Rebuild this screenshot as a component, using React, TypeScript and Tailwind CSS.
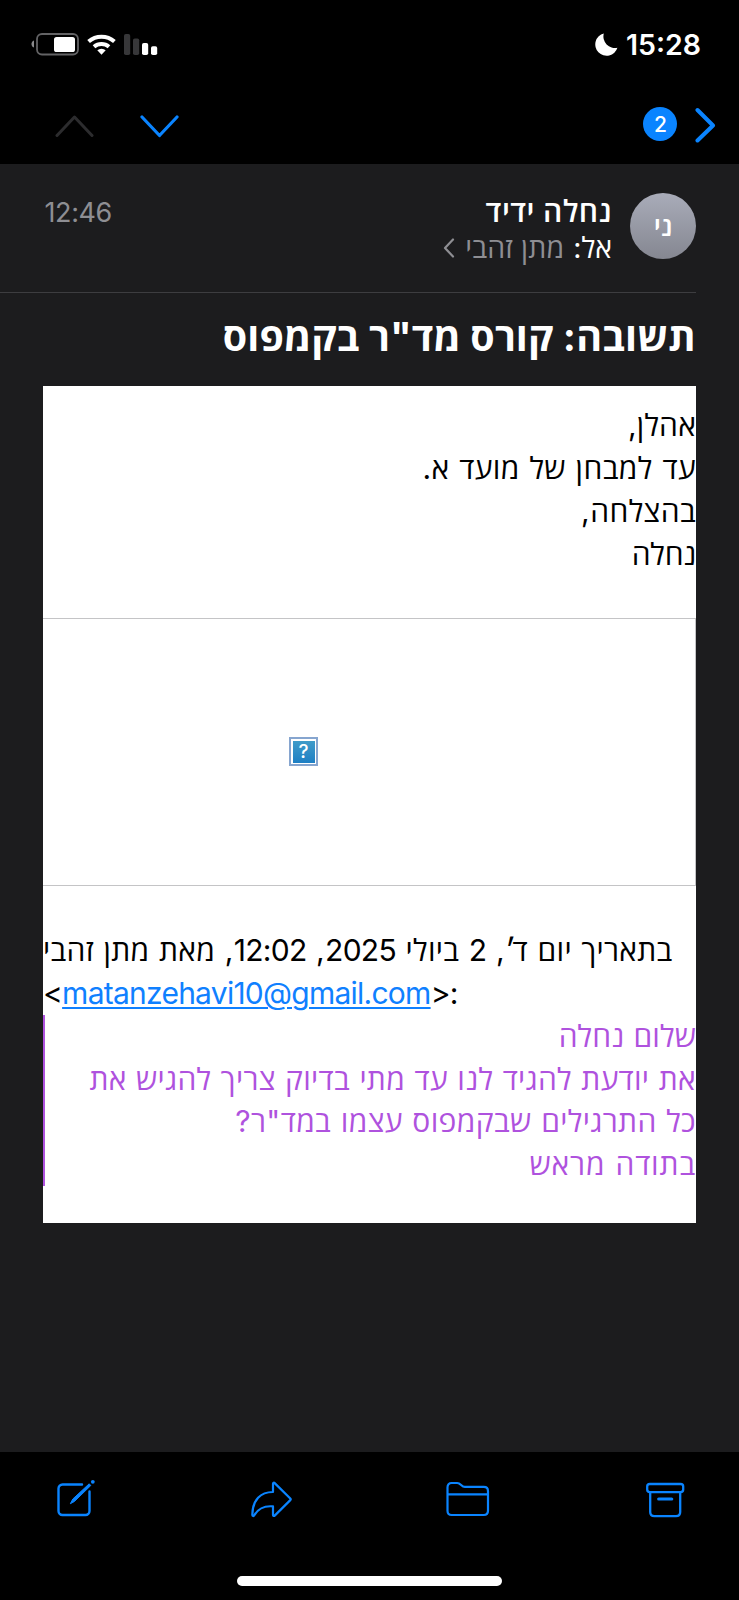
import React from "react";

const BodyLine = ({ children, className = "" }: { children: React.ReactNode; className?: string }) => (
  <p className={`h-[42.8px] whitespace-nowrap leading-[42.8px] [word-spacing:0.8px] ${className}`}>{children}</p>
);

const Num = ({ children }: { children: React.ReactNode }) => <span className="tracking-[-0.7px]">{children}</span>;

const StatusBar = () => (
  <div dir="ltr" className="flex h-[88px] items-center justify-between pl-[31px] pr-[38px]">
    <svg width="128" height="24" viewBox="0 0 128 24" className="shrink-0">
      <path d="M3 8.5c-3.400 1-3.400 6 0 7z" fill="#8a8a8c" />
      <rect x="6" y="2" width="41" height="20.500" rx="5" fill="none" stroke="#636365" strokeWidth="1.800" />
      <rect x="23" y="5" width="21" height="15" rx="2.600" fill="#fff" />
      <g fill="none" stroke="#fff" strokeWidth="4">
        <path d="M57.600 9.600a19.500 19.500 0 0 1 25.800 0" />
        <path d="M63 14.800a11.500 11.500 0 0 1 15 0" />
      </g>
      <path d="M66.300 18.300a6.200 6.200 0 0 1 8.400 0l-4.200 4.500z" fill="#fff" />
      <rect x="93" y="2" width="6.200" height="21" rx="1.800" fill="#373739" />
      <rect x="102" y="6.400" width="6.200" height="16.600" rx="1.800" fill="#373739" />
      <rect x="111" y="11" width="6.200" height="12" rx="1.800" fill="#fff" />
      <rect x="120" y="14.200" width="6.200" height="8.800" rx="1.800" fill="#fff" />
    </svg>
    <div className="flex items-center gap-[8px]">
      <svg width="23" height="23" viewBox="0 0 23 23">
        <path d="M8.800 .5a11.300 11.300 0 1 0 13.600 14.200A11.500 11.500 0 0 1 8.800 .5z" fill="#fff" />
      </svg>
      <span className="pt-px text-[28.500px] font-semibold leading-[34px] text-white">15:28</span>
    </div>
  </div>
);

const NavBar = () => (
  <div dir="ltr" className="flex h-[76px] items-start justify-between pl-[55px] pr-[23px] pt-[19px]">
    <div className="flex gap-[46px] pt-[7px]">
      <svg width="39" height="24" viewBox="0 0 39 24" fill="none" stroke="#2c2c2e" strokeWidth="3" strokeLinecap="round" strokeLinejoin="round">
        <path d="M2 21.500 19.500 3 37 21.500" />
      </svg>
      <svg width="39" height="24" viewBox="0 0 39 24" fill="none" stroke="#0a84ff" strokeWidth="3.200" strokeLinecap="round" strokeLinejoin="round">
        <path d="M2 3 19.500 21.500 37 3" />
      </svg>
    </div>
    <div className="flex items-start gap-[17px]">
      <div className="flex size-[34px] items-center justify-center rounded-full bg-[#0a84ff] pl-px pt-px text-[21px] font-medium text-white">2</div>
      <svg width="22" height="36" viewBox="0 0 22 36" fill="none" stroke="#0a84ff" strokeWidth="4" strokeLinecap="round" strokeLinejoin="round">
        <path d="M3.500 3 19 18.500 3.500 33.500" />
      </svg>
    </div>
  </div>
);

const MessageHeader = () => (
  <header className="mr-[43px] flex h-[129px] items-start border-b border-[#3d3d40] pt-[29px]">
    <div className="flex size-[66px] items-center justify-center rounded-full bg-linear-to-b from-[#a9acb9] to-[#858791] pt-[2px] text-[27px] font-semibold text-white">
      ני
    </div>
    <div className="mr-[18px] flex flex-col">
      <span className="text-[30px] font-semibold leading-[36px] tracking-[0.500px] text-white">נחלה ידיד</span>
      <div className="flex items-center pt-px text-[28.500px] leading-[36px]">
        <span className="text-white">אל:</span>
        <span className="mr-[9px] tracking-[0.100px] text-[#8e8e93]">מתן זהבי</span>
        <svg className="mr-[10px]" width="12" height="20" viewBox="0 0 12 20" fill="none" stroke="#8e8e93" strokeWidth="2.200" strokeLinecap="round" strokeLinejoin="round">
          <path d="M10 1.500 2 10l8 8.500" />
        </svg>
      </div>
    </div>
    <span className="mr-auto pl-[44.500px] text-[27px] leading-[39px] tracking-[-0.400px] text-[#8e8e93]">12:46</span>
  </header>
);

const MissingImage = () => (
  <div dir="ltr" className="mt-[42.600px] flex h-[268px] items-center border-y border-r border-[#c4c4c6] pl-[246px]">
    <div className="mb-px flex size-[29px] items-center justify-center border-2 border-[#86a5cf] bg-white">
      <div className="flex size-[22px] items-center justify-center bg-linear-to-b from-[#3f9bc9] to-[#1d7fc4] text-[19px] font-medium leading-none text-white">?</div>
    </div>
  </div>
);

const MessageBody = () => (
  <article className="mx-[43px] mt-[25px] h-[837px] bg-white pt-[18.400px] text-[30px] text-black">
    <BodyLine className="tracking-[0.200px]">אהלן,</BodyLine>
    <BodyLine className="tracking-[0.400px]">עד למבחן של מועד א.</BodyLine>
    <BodyLine className="tracking-[0.400px]">בהצלחה,</BodyLine>
    <BodyLine className="tracking-[-0.200px]">נחלה</BodyLine>
    <MissingImage />
    <div className="mt-[43px] text-left">
      <BodyLine className="tracking-[0.300px]">
        בתאריך יום ד<span className="tracking-[-4px]">׳</span>, <Num>2</Num> ביולי <Num>2025</Num>, <Num>12:02</Num>, מאת מתן זהבי
      </BodyLine>
      <p dir="ltr" className="h-[42.800px] whitespace-nowrap leading-[42.800px] tracking-[-0.750px]">
        &lt;
        <a className="text-[#0f80ff] underline decoration-[2px] underline-offset-[3px]">matanzehavi10@gmail.com</a>
        &gt;:
      </p>
    </div>
    <blockquote className="border-l-2 border-[#af52de] text-[#af52de]">
      <BodyLine className="tracking-[0.100px]">שלום נחלה</BodyLine>
      <BodyLine className="tracking-[0.260px]">את יודעת להגיד לנו עד מתי בדיוק צריך להגיש את</BodyLine>
      <BodyLine className="tracking-[0.350px]">כל התרגילים שבקמפוס עצמו במד"ר?</BodyLine>
      <BodyLine className="tracking-[0.850px]">בתודה מראש</BodyLine>
    </blockquote>
  </article>
);

const Toolbar = () => (
  <footer dir="ltr" className="flex h-[148px] flex-col items-center bg-black">
    <div className="flex h-[124px] w-full items-start justify-between pl-[55px] pr-[54px] pt-[27px]">
      <svg width="40" height="40" viewBox="0 0 40 40" fill="none" stroke="#0a84ff" strokeWidth="2.400" strokeLinecap="round" strokeLinejoin="round">
        <path d="M27 5.500H7.500a4 4 0 0 0-4 4v22.500a4 4 0 0 0 4 4h23a4 4 0 0 0 4-4V12.500" />
        <path d="M15.500 24.400l2.300-4.400L34.200 4.800l1.600 1.700L19.600 22.300z" fill="#0a84ff" strokeWidth="1" />
        <circle cx="37.800" cy="2.800" r="1.900" fill="#0a84ff" stroke="none" />
      </svg>
      <svg className="ml-[-1px]" width="44" height="40" viewBox="0 0 44 40" fill="none" stroke="#0a84ff" strokeWidth="2.200" strokeLinecap="round" strokeLinejoin="round">
        <path d="M24 4.800c0-1.100 1-1.400 1.700-.7l15.600 15.400c.6.600.6 1 0 1.600L25.700 36.600c-.7.700-1.700.4-1.700-.7V27.400C15.500 26.600 9.500 29 5.300 36.300c-.7 1.200-2 .8-2-.6C3.600 21 11.500 13 24 13z" />
      </svg>
      <svg className="ml-[-1px]" width="44" height="40" viewBox="0 0 44 40" fill="none" stroke="#0a84ff" strokeWidth="2.200" strokeLinecap="round" strokeLinejoin="round">
        <path d="M1.500 8.500c0-3 1.400-4.500 4.200-4.500h5.500c3.600 0 4.200 3.900 7.600 3.900h19c2.800 0 4.200 1.500 4.200 4.300v19.600c0 2.800-1.400 4.200-4.200 4.200H5.700c-2.800 0-4.200-1.400-4.200-4.200zM2 15.300h39.500" />
      </svg>
      <svg width="40" height="40" viewBox="0 0 40 40" fill="none" stroke="#0a84ff" strokeWidth="2.300" strokeLinecap="round" strokeLinejoin="round">
        <rect x="2.200" y="5" width="36" height="8.200" rx="2.600" />
        <path d="M5.200 13.500v19.500c0 3 1.300 4.200 4.200 4.200h21.600c2.900 0 4.200-1.200 4.200-4.200V13.500" />
        <path d="M13.700 20h13" strokeWidth="3.200" />
      </svg>
    </div>
    <div className="h-[9.500px] w-[265px] rounded-full bg-white" />
  </footer>
);

export default function App() {
  return (
    <div dir="rtl" className="flex h-[1600px] w-[739px] flex-col overflow-hidden bg-[#1c1c1e] font-['Inter','Open_Sans',sans-serif]">
      <div className="h-[164px] shrink-0 bg-black">
        <StatusBar />
        <NavBar />
      </div>
      <main className="h-[1288px]">
        <MessageHeader />
        <h1 className="mr-[43px] mt-[20px] h-[48px] whitespace-nowrap text-[39.400px] font-bold leading-[48px] tracking-[0.150px] text-white">
          תשובה: קורס מד"ר בקמפוס
        </h1>
        <MessageBody />
      </main>
      <Toolbar />
    </div>
  );
}
